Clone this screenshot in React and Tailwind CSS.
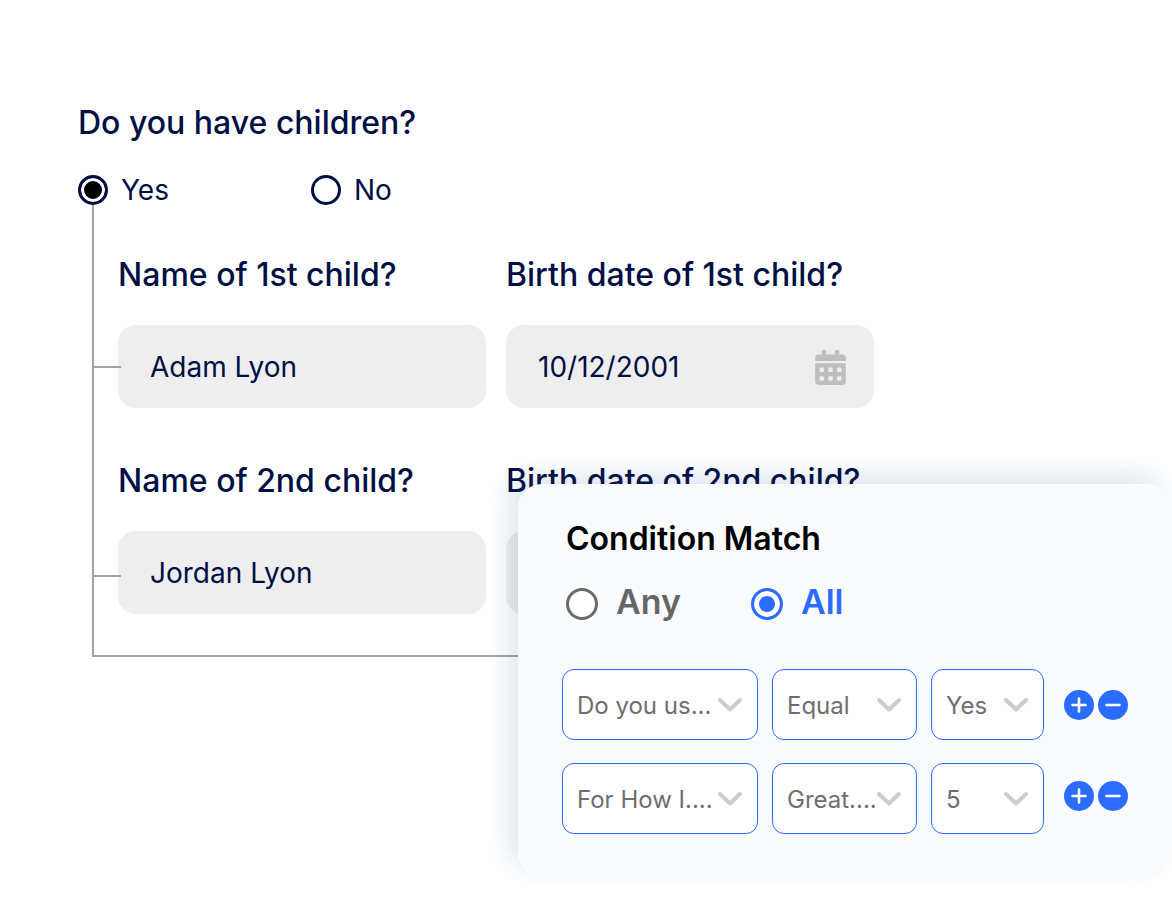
import { FaCalendarAlt } from "react-icons/fa";

const children = [
  { ordinal: "1st", name: "Adam Lyon", birth: "10/12/2001", tick: "top-[161px]" },
  { ordinal: "2nd", name: "Jordan Lyon", birth: "", tick: "top-[370px]" },
];

const conditions = [
  { question: "Do you us...", operator: "Equal", value: "Yes" },
  { question: "For How I....", operator: "Great....", value: "5" },
];

function FormRadio({ label, checked }) {
  return (
    <label className="flex items-center gap-[13px] text-[28px] leading-8">
      <input
        type="radio"
        name="has-children"
        defaultChecked={checked}
        className="size-[30px] shrink-0 appearance-none rounded-full border-3 border-[#000f44] bg-white checked:bg-black checked:shadow-[inset_0_0_0_3px_white]"
      />
      {label}
    </label>
  );
}

function TextField({ id, label, value, date }) {
  return (
    <div className="flex min-w-0 flex-1 flex-col gap-[26px]">
      <label htmlFor={id} className="whitespace-nowrap text-[32px] font-medium leading-12">
        {label}
      </label>
      <div className="flex h-[83px] items-center rounded-[18px] bg-[#eeeeee] pr-[26px] pl-8">
        <input
          id={id}
          type="text"
          defaultValue={value}
          className="w-full min-w-0 bg-transparent text-[28px] leading-8 outline-none"
        />
        {date && <FaCalendarAlt className="mt-0.5 size-[35px] shrink-0 text-[#bfbfbf]" />}
      </div>
    </div>
  );
}

function MatchRadio({ label, checked }) {
  return (
    <label className="flex items-center gap-[18px] text-[34px] leading-10 font-semibold text-[#666666] has-checked:text-[#2b6cff]">
      <input
        type="radio"
        name="match"
        defaultChecked={checked}
        className="mt-1 size-8 shrink-0 appearance-none rounded-full border-3 border-[#6b6b6b] bg-white checked:border-[#2b6cff] checked:bg-[#2b6cff] checked:shadow-[inset_0_0_0_5px_white]"
      />
      {label}
    </label>
  );
}

function Picker({ label, value, width }) {
  return (
    <div className={`relative ${width}`}>
      <select
        aria-label={label}
        defaultValue={value}
        className="h-[71px] w-full appearance-none rounded-xl border border-[#2b6cff] bg-white pt-0.5 pl-3.5 text-2xl text-[#6e6e6e]"
      >
        <option>{value}</option>
      </select>
      <svg
        viewBox="0 0 26 16"
        className="pointer-events-none absolute top-[28px] right-[15px] h-4 w-[26px]"
        fill="none"
        stroke="#cccccc"
        strokeWidth="4"
        strokeLinecap="round"
        strokeLinejoin="round"
        aria-hidden="true"
      >
        <path d="M3 3 L13 12.500 L23 3" />
      </svg>
    </div>
  );
}

function RoundButton({ label, path }) {
  return (
    <button type="button" aria-label={label} className="size-[30px] rounded-full bg-[#2b6cff]">
      <svg viewBox="0 0 30 30" fill="none" stroke="white" strokeWidth="2.600" strokeLinecap="round" aria-hidden="true">
        <path d={path} />
      </svg>
    </button>
  );
}

export default function App() {
  return (
    <div className="relative min-h-screen overflow-hidden bg-white font-['Inter',sans-serif] text-[#000f44]">
      <main className="pt-[99px] pb-10">
        <fieldset className="pl-[78px]">
          <legend className="text-[32px] font-medium leading-12">Do you have children?</legend>
          <div className="mt-[27px] flex gap-[142px]">
            <FormRadio label="Yes" checked />
            <FormRadio label="No" />
          </div>
        </fieldset>

        <section className="relative -mt-px ml-[92px] flex w-[782px] max-w-full flex-col gap-[49px] border-b-2 border-l-2 border-[#a3a3a3] pt-[46px] pb-[41px] pl-6">
          {children.map((child) => (
            <div key={child.ordinal} className="flex gap-5">
              <TextField
                id={`name-${child.ordinal}`}
                label={`Name of ${child.ordinal} child?`}
                value={child.name}
              />
              <TextField
                id={`birth-${child.ordinal}`}
                label={`Birth date of ${child.ordinal} child?`}
                value={child.birth}
                date
              />
              <span className={`absolute left-0 h-0.5 w-[27px] bg-[#a3a3a3] ${child.tick}`} />
            </div>
          ))}
        </section>
      </main>

      <section className="absolute top-[484px] right-px left-[518px] rounded-3xl bg-[#fafbfd] pt-[35px] pr-[43px] pb-[43px] pl-11 shadow-[-10px_-10px_22px_rgba(40,75,140,0.14)]">
        <h2 className="pl-1 text-[32px] leading-10 font-semibold text-black">Condition Match</h2>
        <div className="mt-[23px] flex gap-[70px] pl-1">
          <MatchRadio label="Any" />
          <MatchRadio label="All" checked />
        </div>
        <div className="mt-[47px] flex gap-5">
          <div className="flex min-w-0 flex-1 flex-col gap-[23px]">
            {conditions.map((c) => (
              <div key={c.question} className="flex gap-3.5">
                <Picker label="Question" value={c.question} width="flex-1" />
                <Picker label="Operator" value={c.operator} width="w-[145px]" />
                <Picker label="Value" value={c.value} width="w-[113px]" />
              </div>
            ))}
          </div>
          <div className="flex flex-col gap-[61px] pt-[21px]">
            {conditions.map((c) => (
              <div key={c.question} className="flex gap-1">
                <RoundButton label="Add condition" path="M8.500 15 H21.500 M15 8.500 V21.500" />
                <RoundButton label="Remove condition" path="M8.500 15 H21.500" />
              </div>
            ))}
          </div>
        </div>
      </section>
    </div>
  );
}
